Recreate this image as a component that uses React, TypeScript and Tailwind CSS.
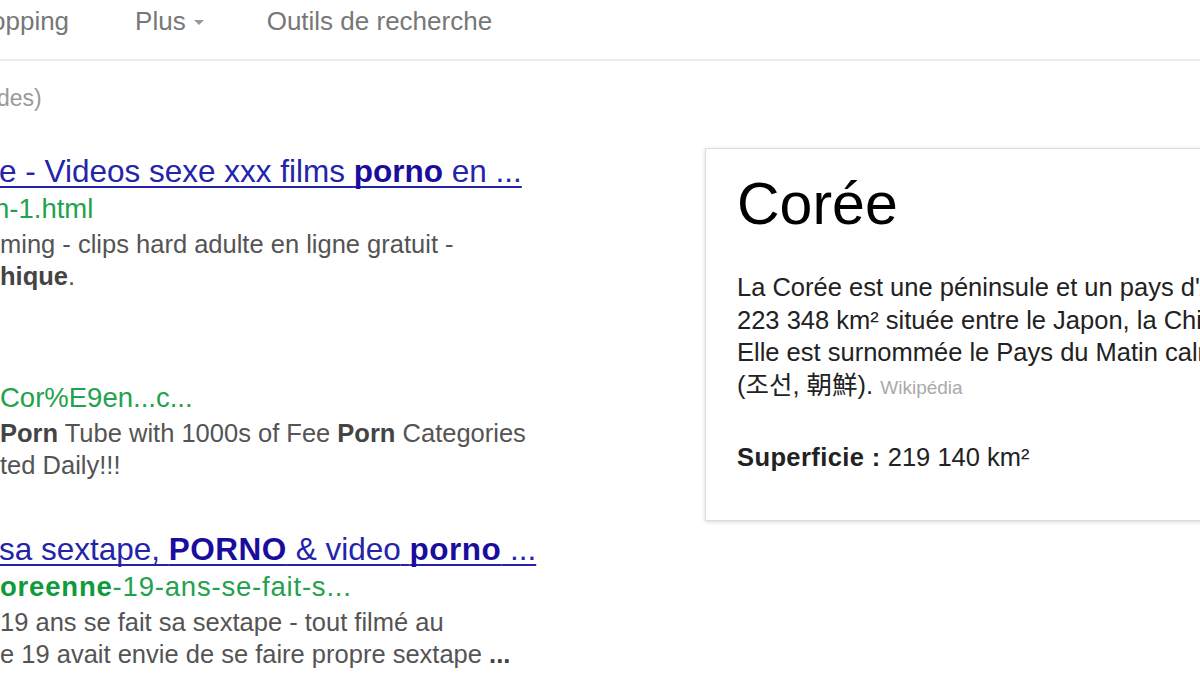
import React from 'react';

const font = { fontFamily: '"Liberation Sans", Arial, "Noto Sans CJK KR", sans-serif' };

interface Result {
  title: React.ReactNode;
  url: React.ReactNode;
  urlShift: string;
  lines: React.ReactNode[];
}

const results: Result[] = [
  {
    title: (
      <>
        e - Videos sexe xxx films <b className="text-[#1a0d9e]">porno</b> en ...
      </>
    ),
    url: <>n-1.html</>,
    urlShift: 'ml-[-6px]',
    lines: [
      <>ming - clips hard adulte en ligne gratuit -</>,
      <>
        <b className="text-[#444]">hique</b>.
      </>,
    ],
  },
  {
    title: null,
    url: <>Cor%E9en...c...</>,
    urlShift: 'ml-0',
    lines: [
      <>
        <b className="text-[#444]">Porn</b> Tube with 1000s of Fee <b className="text-[#444]">Porn</b> Categories
      </>,
      <>ted Daily!!!</>,
    ],
  },
  {
    title: (
      <>
        sa sextape, <b className="text-[#1a0d9e] tracking-[0.5px]">PORNO</b> &amp; video{' '}
        <b className="text-[#1a0d9e] tracking-[0.5px]">porno</b> ...
      </>
    ),
    url: (
      <span className="tracking-[0.8px]">
        <b className="text-[#0f9a3c]">oreenne</b>-19-ans-se-fait-s...
      </span>
    ),
    urlShift: 'ml-0',
    lines: [
      <>19 ans se fait sa sextape - tout filmé au</>,
      <>
        e 19 avait envie de se faire propre sextape <b className="text-[#444]">...</b>
      </>,
    ],
  },
];

export default function App() {
  return (
    <div className="w-[1200px] h-[675px] overflow-hidden bg-white" style={font}>
      {/* Tabs */}
      <div className="h-[61px] border-b-2 border-[#ebebeb] flex items-start text-[26px] leading-[42px] text-[#777] whitespace-nowrap">
        <span className="ml-[-9px]">opping</span>
        <span className="ml-[66px] flex items-center">
          Plus
          <span className="ml-[8px] mt-[2px] w-0 h-0 border-l-[5px] border-r-[5px] border-t-[5px] border-l-transparent border-r-transparent border-t-[#999]" />
        </span>
        <span className="ml-[63px]">Outils de recherche</span>
      </div>

      <div className="mt-[22px] text-[23px] leading-[30px] text-[#999] ml-[-3px]">des)</div>

      <div className="mt-[35px] flex items-start">
        {/* Results */}
        <div className="w-[705px] shrink-0 pt-[4px] flex flex-col gap-[49px]">
          {results.map((r, i) => (
            <div key={i} className="flex flex-col whitespace-nowrap">
              <div className="h-[38px] text-[31.5px] leading-[38px] text-[#2424aa] underline underline-offset-[4px] decoration-[1.5px] [text-decoration-skip-ink:none] ml-[-1px]">
                {r.title}
              </div>
              <div className={`h-[38px] text-[27.5px] leading-[38px] text-[#22a24c] ${r.urlShift}`}>{r.url}</div>
              {r.lines.map((l, j) => (
                <div key={j} className="text-[25.5px] leading-[32px] text-[#545454]">
                  {l}
                </div>
              ))}
            </div>
          ))}
        </div>

        {/* Knowledge panel */}
        <div className="w-[700px] shrink-0 border border-[#dcdcdc] shadow-[0_1px_4px_rgba(0,0,0,0.15)] pl-[31px] pt-[25px] pb-[47px] whitespace-nowrap">
          <div className="text-[59px] leading-[60px] text-black">Corée</div>
          <div className="mt-[37px] text-[25.5px] leading-[32.5px] text-[#222]">
            <div>La Corée est une péninsule et un pays d'Asie de l'Est d'une superficie de</div>
            <div>223 348 km² située entre le Japon, la Chine et la Russie.</div>
            <div>Elle est surnommée le Pays du Matin calme.</div>
            <div>
              (조선, 朝鮮). <span className="text-[19px] text-[#aaa]">Wikipédia</span>
            </div>
          </div>
          <div className="mt-[37px] text-[25.5px] leading-[32px] text-[#222]">
            <b className="tracking-[0.4px]">Superficie :</b> 219 140 km²
          </div>
        </div>
      </div>
    </div>
  );
}
